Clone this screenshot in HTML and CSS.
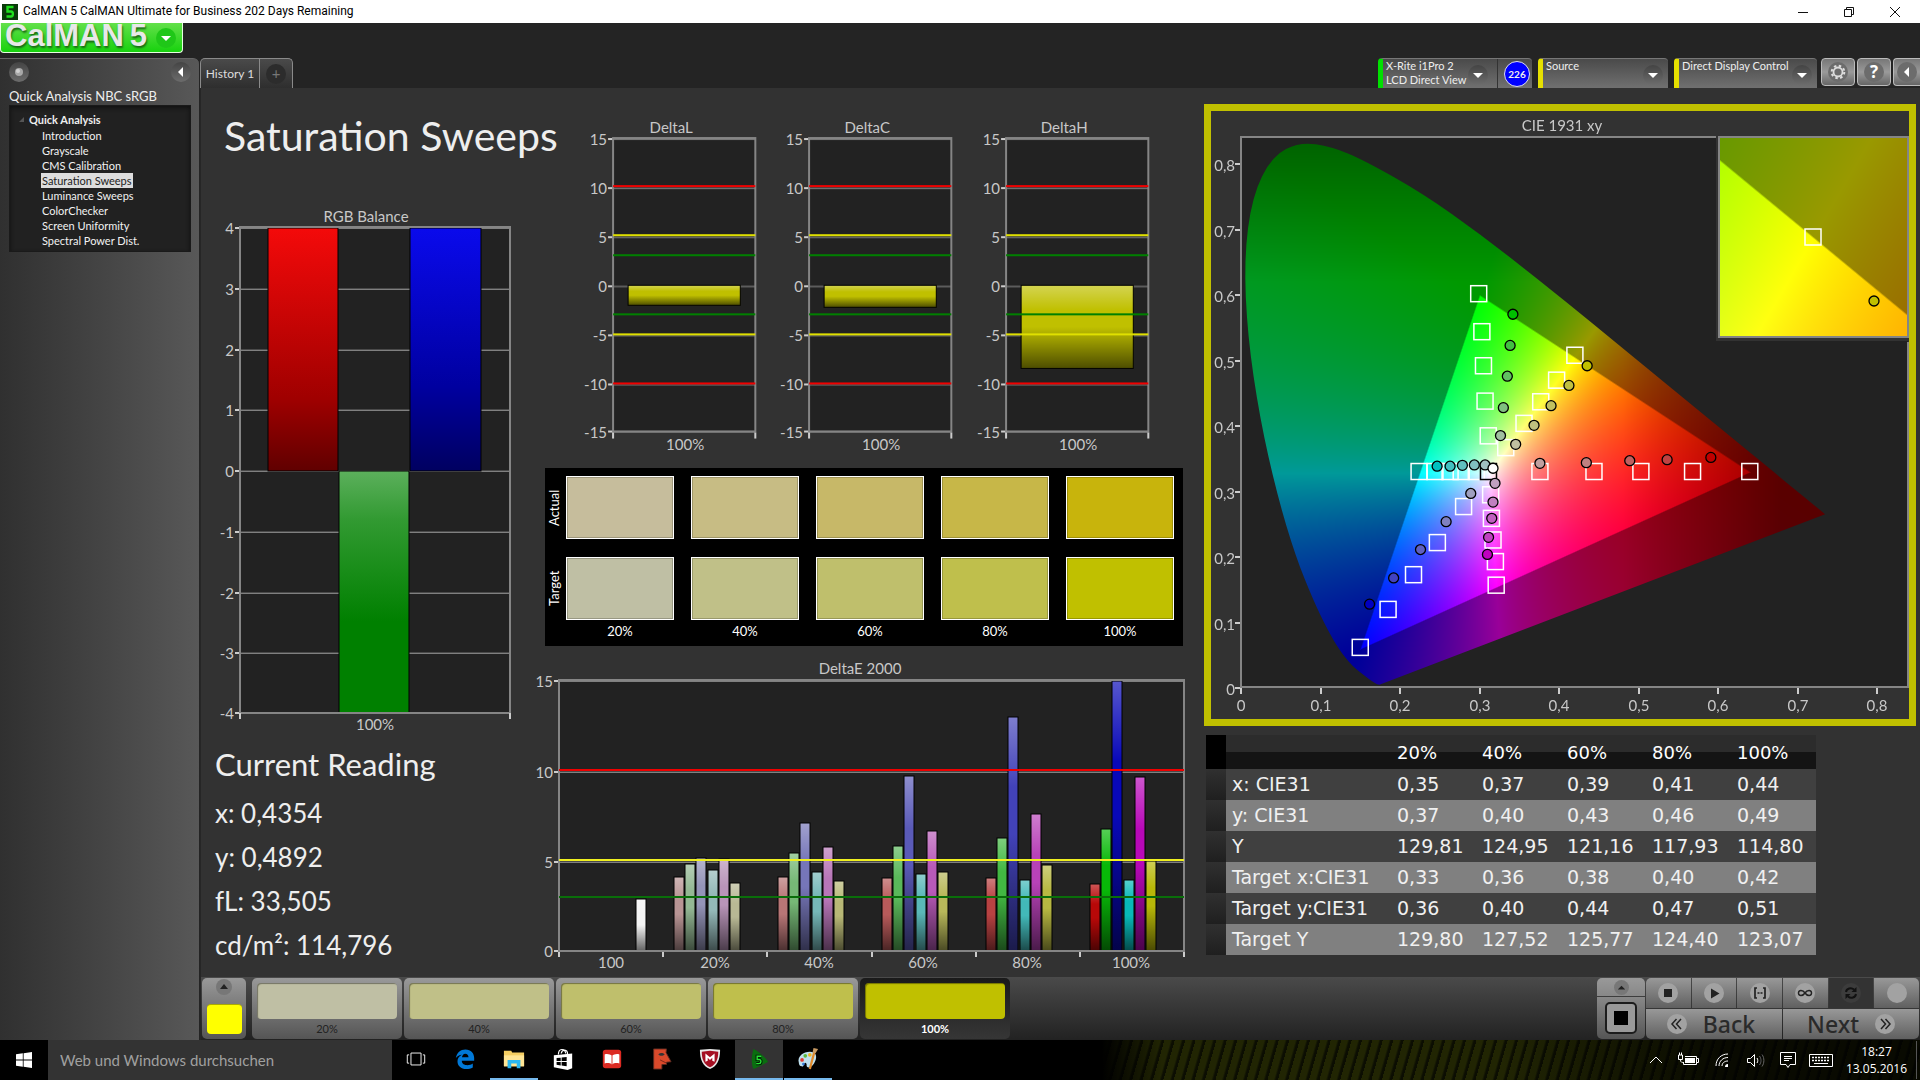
FILE: index.html
```html
<!DOCTYPE html>
<html lang="en">
<head>
<meta charset="utf-8">
<title>CalMAN 5</title>
<link rel="stylesheet" href="styles.css">
</head>
<body>
<div class="app">
  <header class="titlebar">
    <svg class="app-icon" viewBox="0 0 16 16"><rect width="16" height="16" fill="#0a3a0a"/><path d="M11.500 3H5.500V7.500H9C11.500 7.500 11.500 12.500 9 12.500H4.500" fill="none" stroke="#1fe01f" stroke-width="2.400"/></svg>
    <span class="app-title">CalMAN 5 CalMAN Ultimate for Business 202 Days Remaining</span>
    <div class="window-controls">
      <button aria-label="Minimize"><svg viewBox="0 0 12 12"><path d="M1 6.500H11"/></svg></button>
      <button aria-label="Restore"><svg viewBox="0 0 12 12"><path d="M1.500 3.500H8.500V10.500H1.500ZM3.500 3.500V1.500H10.500V8.500H8.500"/></svg></button>
      <button aria-label="Close"><svg viewBox="0 0 12 12"><path d="M1 1L11 11M11 1L1 11"/></svg></button>
    </div>
  </header>

  <div class="shell">
    <aside class="side">
      <button class="logo"><span class="logo-name">CalMAN</span><span class="logo-five">5</span><span class="logo-drop"><svg viewBox="0 0 20 20"><path d="M5 8H15L10 13Z" fill="#fff"/></svg></span></button>
      <div class="sidebar">
        <div class="side-tools">
          <button class="knob" aria-label="Record"><svg viewBox="0 0 20 20"><circle cx="10" cy="10" r="4" fill="#a8a8a8"/><circle cx="9" cy="9" r="2" fill="#d0d0d0"/></svg></button>
          <button class="knob" aria-label="Collapse"><svg viewBox="0 0 20 20"><path d="M12 5V15L7 10Z" fill="#fff"/></svg></button>
        </div>
        <h2 class="side-title">Quick Analysis NBC sRGB</h2>
        <nav class="tree">
          <div class="tree-head"><svg viewBox="0 0 8 8"><path d="M6 1V6H1Z" fill="#555"/></svg>Quick Analysis</div>
          <a href="#">Introduction</a>
          <a href="#">Grayscale</a>
          <a href="#">CMS Calibration</a>
          <a href="#" class="selected">Saturation Sweeps</a>
          <a href="#">Luminance Sweeps</a>
          <a href="#">ColorChecker</a>
          <a href="#">Screen Uniformity</a>
          <a href="#">Spectral Power Dist.</a>
        </nav>
      </div>
    </aside>

    <main class="main">
      <div class="topbar">
        <div class="tabs"><button class="tab">History 1</button><button class="tab add" aria-label="Add"><span>+</span></button></div>
        <div class="devices">
          <div class="device meter ok">
            <span class="device-name">X-Rite i1Pro 2<br>LCD Direct View</span>
            <button class="knob drop" aria-label="Meter"><svg viewBox="0 0 20 20"><path d="M5 8H15L10 13Z" fill="#fff"/></svg></button>
            <span class="count"><b>226</b></span>
          </div>
          <div class="device source">
            <span class="device-name">Source</span>
            <button class="knob drop" aria-label="Source"><svg viewBox="0 0 20 20"><path d="M5 8H15L10 13Z" fill="#fff"/></svg></button>
          </div>
          <div class="device display">
            <span class="device-name">Direct Display Control</span>
            <button class="knob drop" aria-label="Display"><svg viewBox="0 0 20 20"><path d="M5 8H15L10 13Z" fill="#fff"/></svg></button>
          </div>
          <button class="tool" aria-label="Settings"><svg viewBox="0 0 24 24"><circle cx="12" cy="12" r="10" fill="#6c6c6c"/><circle cx="12" cy="12" r="4.500" fill="none" stroke="#ddd" stroke-width="1.800"/><circle cx="12" cy="12" r="6.300" fill="none" stroke="#ddd" stroke-width="2" stroke-dasharray="2.500 2.450"/></svg></button>
          <button class="tool help" aria-label="Help"><span>?</span></button>
          <button class="tool last" aria-label="Collapse panel"><svg viewBox="0 0 24 24"><circle cx="12" cy="12" r="10" fill="#6c6c6c"/><path d="M14 7V17L9 12Z" fill="#fff"/></svg></button>
        </div>
      </div>

      <div class="board">
        <section class="col-left">
          <h1>Saturation Sweeps</h1>
          <svg id="rgb" class="chart" viewBox="0 0 330 540"></svg>
          <h2>Current Reading</h2>
          <p>x: 0,4354</p>
          <p>y: 0,4892</p>
          <p>fL: 33,505</p>
          <p>cd/m²: 114,796</p>
        </section>

        <section class="col-mid">
          <div class="deltas">
            <svg id="deltaL" class="chart" viewBox="0 0 196 350"></svg>
            <svg id="deltaC" class="chart" viewBox="0 0 196 350"></svg>
            <svg id="deltaH" class="chart" viewBox="0 0 196 350"></svg>
          </div>
          <div class="swatches">
            <span class="row-name">Actual</span><i class="a20"></i><i class="a40"></i><i class="a60"></i><i class="a80"></i><i class="a100"></i>
            <span class="row-name">Target</span><i class="t20"></i><i class="t40"></i><i class="t60"></i><i class="t80"></i><i class="t100"></i>
            <span></span><b>20%</b><b>40%</b><b>60%</b><b>80%</b><b>100%</b>
          </div>
          <svg id="deltaE" class="chart" viewBox="0 0 670 324"></svg>
        </section>

        <section class="col-right">
          <div class="cie">
            <canvas id="gamut" width="698" height="608"></canvas>
            <svg id="cie" class="chart" viewBox="0 0 698 608"></svg>
          </div>
          <table class="data">
            <thead><tr><th class="grip"></th><th class="name"></th><th>20%</th><th>40%</th><th>60%</th><th>80%</th><th>100%</th></tr></thead>
            <tbody>
              <tr><td class="grip"></td><td>x: CIE31</td><td>0,35</td><td>0,37</td><td>0,39</td><td>0,41</td><td>0,44</td></tr>
              <tr><td class="grip"></td><td>y: CIE31</td><td>0,37</td><td>0,40</td><td>0,43</td><td>0,46</td><td>0,49</td></tr>
              <tr><td class="grip"></td><td>Y</td><td>129,81</td><td>124,95</td><td>121,16</td><td>117,93</td><td>114,80</td></tr>
              <tr><td class="grip"></td><td>Target x:CIE31</td><td>0,33</td><td>0,36</td><td>0,38</td><td>0,40</td><td>0,42</td></tr>
              <tr><td class="grip"></td><td>Target y:CIE31</td><td>0,36</td><td>0,40</td><td>0,44</td><td>0,47</td><td>0,51</td></tr>
              <tr><td class="grip"></td><td>Target Y</td><td>129,80</td><td>127,52</td><td>125,77</td><td>124,40</td><td>123,07</td></tr>
            </tbody>
          </table>
        </section>
      </div>

      <footer class="steps">
        <button class="current" aria-label="Pattern"><svg viewBox="0 0 16 16"><circle cx="8" cy="8" r="8" fill="#777"/><path d="M4 10L8 5L12 10Z" fill="#222"/></svg><i></i></button>
        <div class="step-list">
          <button class="step"><i class="t20"></i>20%</button>
          <button class="step"><i class="t40"></i>40%</button>
          <button class="step"><i class="t60"></i>60%</button>
          <button class="step"><i class="t80"></i>80%</button>
          <button class="step active"><i class="t100"></i>100%</button>
        </div>
        <div class="stopper">
          <button aria-label="Expand"><svg viewBox="0 0 16 16"><circle cx="8" cy="8" r="8" fill="#777"/><path d="M4 10L8 6L12 10Z" fill="#222"/></svg></button>
          <button class="big" aria-label="Stop reading"><svg viewBox="0 0 32 32"><rect x="1" y="1" width="30" height="30" rx="4" fill="#999" stroke="#1c1c1c" stroke-width="2"/><rect x="9" y="9" width="14" height="14" fill="#000"/></svg></button>
        </div>
        <div class="transport">
          <button aria-label="Stop"><svg viewBox="0 0 20 20"><circle cx="10" cy="10" r="10"/><rect x="6" y="6" width="8" height="8" fill="#222"/></svg></button>
          <button aria-label="Play"><svg viewBox="0 0 20 20"><circle cx="10" cy="10" r="10"/><path d="M7 5.500L15.500 10.500L7 15.500Z" fill="#222"/></svg></button>
          <button aria-label="Read series"><svg viewBox="0 0 20 20"><circle cx="10" cy="10" r="10"/><path d="M7 5H5V15H7M13 5H15V15H13M7.500 10H9M9.500 10H10.500M11 10H12.500" fill="none" stroke="#222" stroke-width="1.700"/></svg></button>
          <button aria-label="Read continuously"><svg viewBox="0 0 20 20"><circle cx="10" cy="10" r="10"/><path d="M10 10C8 7 3.500 6.500 3.500 10S8 13 10 10S16.500 6.500 16.500 10S12 13 10 10Z" fill="none" stroke="#222" stroke-width="1.500"/></svg></button>
          <button class="dark" aria-label="Refresh"><svg viewBox="0 0 20 20"><circle cx="10" cy="10" r="10"/><path d="M5 9C5.500 5.500 10 4 13 6.500M15 11C14.500 14.500 10 16 7 13.500" fill="none" stroke="#111" stroke-width="2"/><path d="M15.500 4V9H10.500ZM4.500 16V11H9.500Z" fill="#111"/></svg></button>
          <button aria-label="Blank"><svg viewBox="0 0 20 20"><circle cx="10" cy="10" r="10"/></svg></button>
          <button class="wide"><svg viewBox="0 0 20 20"><circle cx="10" cy="10" r="10"/><path d="M9.500 5L5 10L9.500 15M14 5L9.500 10L14 15" fill="none" stroke="#222" stroke-width="1.500"/></svg>Back</button>
          <button class="wide">Next<svg viewBox="0 0 20 20"><circle cx="10" cy="10" r="10"/><path d="M6 5L10.500 10L6 15M10.500 5L15 10L10.500 15" fill="none" stroke="#222" stroke-width="1.500"/></svg></button>
        </div>
      </footer>
    </main>
  </div>

  <div class="taskbar">
    <button class="start" aria-label="Start"><svg viewBox="0 0 16 16"><path d="M0 2.300L6.800 1.300V7.600H0ZM7.600 1.200L16 0V7.600H7.600ZM0 8.400H6.800V14.700L0 13.700ZM7.600 8.400H16V16L7.600 14.800Z" fill="#fff"/></svg></button>
    <input class="search" type="text" aria-label="Search" placeholder="Web und Windows durchsuchen">
    <div class="task-apps">
      <button aria-label="Task view"><svg viewBox="0 0 24 24"><path d="M6.500 5.500H17.500V18.500H6.500ZM4.500 7.500H2.500V16.500H4.500M19.500 7.500H21.500V16.500H19.500" fill="none" stroke="#fff"/></svg></button>
      <button aria-label="Edge"><svg viewBox="0 0 24 24"><path d="M2 11C3 5 7 1.500 12.500 1.500C18.500 1.500 22 5.500 22 11V14H8.500C8.500 17.500 11.500 18.800 14.500 18.800C17 18.800 19 18 20.500 17V21.200C18.500 22.300 16 23 13.500 23C7.500 23 3.800 19.500 3.800 14.500C3.800 11.500 5.500 8.800 8.500 7.300C6 7.500 3.500 9 2 11ZM8.700 10.200H15.800C15.800 7.500 14.300 6.200 12.300 6.200C10.300 6.200 9 7.800 8.700 10.200Z" fill="#0078d7"/></svg></button>
      <button class="open" aria-label="Explorer"><svg viewBox="0 0 24 24"><path d="M1 3H9L10 5H23V20H1Z" fill="#f5ce62"/><path d="M1 8H23V20H1Z" fill="#ffe594"/><path d="M5 13H19V22H15V17H9V22H5Z" fill="#2bb7f0"/></svg></button>
      <button aria-label="Store"><svg viewBox="0 0 24 24"><path d="M7 7C7 0 14 0 15 6M10 6C11 1 17 1 17 7" fill="none" stroke="#fff" stroke-width="1.300"/><path d="M2 8L22 6V22L17 24L2 21Z" fill="#fff"/><path d="M5 11L9.500 10.500V14.200H5ZM10.500 10.400L16 9.800V14.200H10.500ZM5 15.200H9.500V19L5 18.400ZM10.500 15.200H16V20L10.500 19.200Z" fill="#000"/></svg></button>
      <button aria-label="Reader"><svg viewBox="0 0 24 24"><rect x="2" y="2" width="20" height="20" rx="3" fill="#dc2a22"/><path d="M4 7C7 6 10 7 12 8.500C14 7 17 6 20 7V17C17 16 14 16.500 12 18C10 16.500 7 16 4 17Z" fill="#fff"/><path d="M12 8V18" stroke="#dc2a22"/></svg></button>
      <button aria-label="Face"><svg viewBox="0 0 24 24"><path d="M4 1H18L17.500 5L23 15L18 15.500V18H13V23H4Z" fill="#d9492b" stroke="#5a2a20"/><path d="M9 7C11 5 14 5 16 7C14 9 11 9 9 7Z" fill="#333"/><path d="M11 13L18 16.500" stroke="#7a2415"/></svg></button>
      <button aria-label="Security"><svg viewBox="0 0 24 24"><path d="M1 2L12 1L23 2C23 13 20 20 12 23C4 20 1 13 1 2Z" fill="#e8e8e8"/><path d="M3 4L12 3L21 4C21 12 18.500 18 12 21C5.500 18 3 12 3 4Z" fill="#a50f22"/><path d="M7 15V6L12 10L17 6V15L14.500 14V10.500L12 13L9.500 10.500V14Z" fill="#fff"/></svg></button>
      <button class="active" aria-label="CalMAN"><svg viewBox="0 0 24 24"><path d="M6 1C12 4 18 9 22 15C16 18 11 21 6 23C3 17 4 8 6 1Z" fill="#0a6d10"/><path d="M14.500 9H10V12.500H12.500C15 13 14.500 17 12 17H9" fill="none" stroke="#021a04" stroke-width="3.500"/><path d="M14.500 9H10V12.500H12.500C15 13 14.500 17 12 17H9" fill="none" stroke="#27e436" stroke-width="1.500"/></svg></button>
      <button class="open" aria-label="Paint"><svg viewBox="0 0 24 24"><path d="M2 16C0 9 7 4 14 4C21 4 22 9 20 14C18 19 15 22 12 21C9 20 12 17 9 16C7 16 8 21 5 20C3 20 2 18 2 16Z" fill="#bfe0ee"/><circle cx="5.500" cy="13" r="2" fill="#e23b2e"/><circle cx="9" cy="8.500" r="2" fill="#5cb83a"/><circle cx="14" cy="7.500" r="2" fill="#f0b323"/><circle cx="7" cy="17.500" r="1.500" fill="#3a7bd5"/><path d="M19 4L14 23" stroke="#e08a2c" stroke-width="2.500"/><path d="M17 5L18 0L23 1L20 6Z" fill="#c89a62"/></svg></button>
    </div>
    <div class="tray">
      <button aria-label="Show hidden icons"><svg viewBox="0 0 24 20"><path d="M6 13L12 7L18 13" class="ln"/></svg></button>
      <button aria-label="Battery"><svg viewBox="0 0 24 20"><path d="M8 6.500H19.500V14.500H6.500V12M20 8.500H21.500V12.500H20M1.500 5V9.500H5.500V5ZM2.500 2.500V5M4.500 2.500V5M3.500 10C3.500 12.500 5 12.500 7 12.500" class="ln"/><rect x="8" y="8" width="10" height="5" fill="#fff"/></svg></button>
      <button aria-label="Network"><svg viewBox="0 0 24 20"><path d="M6 16C6 9 11 4 18 4M9 16C9 11 13 7.500 18 7.500M12 16C12 13 14.500 11 18 11" class="ln"/><path d="M15 17C15 15 16 14 18 14V17Z" fill="#fff"/></svg></button>
      <button aria-label="Volume"><svg viewBox="0 0 24 20"><path d="M4.500 8.500H7.500L11.500 4.500V16.500L7.500 12.500H4.500Z" class="ln"/><path d="M14 8C15 9.500 15 11.500 14 13" class="ln"/><path d="M16.500 6C18.500 9 18.500 12 16.500 15M19 4.500C21.500 8 21.500 13 19 16.500" fill="none" stroke="#666"/></svg></button>
      <button aria-label="Notifications"><svg viewBox="0 0 24 20"><path d="M4.500 2.500H19.500V14.500H14L12 17.500L10 14.500H4.500ZM8 6.500H16M8 8.500H16M8 10.500H13" class="ln"/></svg></button>
      <button aria-label="Keyboard"><svg viewBox="0 0 24 20"><path d="M.500 4.500H23.500V16.500H.500Z" class="ln"/><path d="M3 7.500H21M3 10.500H21" fill="none" stroke="#fff" stroke-width="1.500" stroke-dasharray="2 1"/><path d="M5 13.500H19" class="ln"/></svg></button>
      <time class="clock">18:27<br>13.05.2016</time>
    </div>
  </div>
</div>
<script src="charts.js"></script>
</body>
</html>
```
FILE: styles.css
```css
* { box-sizing: border-box; }
body { margin: 0; background: #242424; color: #eee; font-family: Lato, "Liberation Sans", sans-serif; }
button { border: 0; padding: 0; margin: 0; background: none; color: inherit; font: inherit; }
h1, h2, p { margin: 0; font-weight: 400; white-space: nowrap; }
svg, canvas { display: block; }

.app { min-height: 100vh; display: flex; flex-direction: column; overflow-x: hidden; }

.titlebar { height: 23px; background: #fff; color: #000; display: flex; align-items: center; padding-left: 2px; gap: 5px; font: 12px/23px Roboto, "Noto Sans", sans-serif; }
.app-icon { width: 16px; height: 16px; }
.window-controls { margin-left: auto; display: flex; padding-right: 2px; }
.window-controls button { width: 46px; height: 22px; display: grid; place-items: center; }
.window-controls svg { width: 12px; height: 12px; fill: none; stroke: #111; }

.shell { flex: 1; display: flex; }
.side { width: 200px; flex: none; display: flex; flex-direction: column; padding-right: 1px; }
.logo { width: 183px; height: 30px; overflow: hidden; display: flex; align-items: center; padding-left: 4px; margin-bottom: 5px; background: linear-gradient(#63e04a, #17d20e); border: 1px solid #e6ffe0; border-top: 0; border-radius: 0 0 4px 4px; color: #e8e8e8; font: bold 31px/24px "Liberation Sans", sans-serif; text-shadow: 1px 2px 2px #1a6a16; }
.logo-name, .logo-five { height: 28px; }
.logo-five { margin-left: 6px; }
.logo-drop { margin: 0 6px 0 auto; width: 20px; height: 20px; border-radius: 50%; background: #1fc718; }
.sidebar { flex: 1; border-radius: 0 6px 0 0; background: linear-gradient(90deg, #303030, #585858); border-top: 1px solid #666; padding: 3px 8px 0 9px; }
.side-tools { display: flex; justify-content: space-between; }
.knob { width: 20px; height: 20px; border-radius: 50%; background: linear-gradient(#444, #6c6c6c); flex: none; }
.side-title { font-size: 13px; line-height: 17px; margin-top: 6px; }
.tree { height: 147px; padding: 5px 0 0 32px; background: #212121; border: 1px solid #1a1a1a; display: flex; flex-direction: column; align-items: flex-start; font: 11px/15px Lato, sans-serif; box-shadow: inset 0 2px 4px #111; }
.tree-head { font-weight: 700; display: flex; align-items: center; margin-left: -24px; gap: 3px; line-height: 17px; }
.tree-head svg { width: 8px; height: 8px; }
.tree a { color: #f2f2f2; text-decoration: none; white-space: nowrap; margin-left: -1px; padding: 0 1px; }
.tree a.selected { background: #ddd; color: #222; }

.main { flex: 1; min-width: 0; display: flex; flex-direction: column; }
.topbar { height: 65px; display: flex; justify-content: space-between; align-items: flex-end; }
.tabs { display: flex; height: 30px; border: 1px solid #8a8a8a; border-bottom: 0; border-radius: 5px 5px 0 0; background: linear-gradient(#4a4a4a, #2e2e2e); }
.tab { width: 58px; font-size: 12px; color: #ddd; }
.tab.add { width: 33px; border-left: 1px solid #8a8a8a; color: #777; display: grid; place-items: center; }
.tab.add span { width: 20px; height: 20px; border-radius: 50%; background: #2c2c2c; line-height: 19px; font-size: 15px; }
.devices { display: flex; height: 30px; }
.device { display: flex; align-items: flex-start; border-left: 5px solid #e6e000; border-radius: 4px 4px 0 0; background: linear-gradient(#4a4a4a, #707070); border-top: 1px solid #777; padding-left: 3px; margin-right: 6px; }
.device.ok { border-left-color: #00e000; }
.device-name { font-size: 11px; line-height: 14px; white-space: nowrap; flex: 1; min-width: 0; }
.drop { margin: 6px 5px 0 0; }
.meter { width: 154px; }
.meter .drop { margin-right: 9px; }
.source { width: 130px; }
.display { width: 143px; margin-right: 4px; }
.count { flex: none; width: 35px; height: 29px; border-left: 1px solid #333; display: grid; place-items: center; padding-left: 4px; }
.count b { width: 26px; height: 26px; border-radius: 50%; border: 1px solid #dde; background: #00f; text-align: center; font-size: 10px; line-height: 24px; }
.tool { width: 34px; height: 28px; margin-right: 2px; border: 1px solid #bbb; border-radius: 4px; background: linear-gradient(#777, #9a9a9a 50%, #666); display: grid; place-items: center; }
.tool svg { width: 24px; height: 24px; }
.tool span { width: 20px; height: 20px; border-radius: 50%; background: #6c6c6c; font: bold 17px/20px "Open Sans", sans-serif; color: #fff; }
.tool.last { width: 27px; margin-right: 0; border-right: 0; border-radius: 4px 0 0 4px; }

.board { flex: 1; background: #323232; display: grid; grid-template-columns: 330fr 670fr 720fr; align-items: start; box-shadow: inset 1px 0 #262626; }
.chart { width: 100%; height: auto; overflow: visible; font-family: Lato, sans-serif; font-size: 15px; fill: #c8c8c8; }
.col-left { padding-top: 18px; min-width: 0; }
.col-left h1 { font-size: 41px; line-height: 60px; margin: 0 0 34px 24px; }
.col-left h2 { font-size: 31px; line-height: 44px; margin: 2px 0 5px 15px; }
.col-left p { font-size: 26px; line-height: 44px; margin-left: 15px; }
.col-mid { padding-top: 22px; min-width: 0; }
.deltas { display: grid; grid-template-columns: repeat(3, 1fr); margin: 0 48px 7px 33px; }
.swatches { margin: 0 17px 5px 15px; height: 178px; background: #000; padding: 8px 9px 0 0; display: grid; grid-template-columns: 4px repeat(5, 1fr); grid-template-rows: 63px 63px 20px; gap: 18px 17px; font-size: 13px; color: #fff; }
.swatches i { border: 1px solid #fff; box-shadow: inset 0 0 0 1px #0003; }
.swatches b { font-weight: 400; text-align: center; margin-top: -15px; }
.row-name { width: 18px; writing-mode: vertical-rl; rotate: 180deg; text-align: center; line-height: 18px; }
.a20 { background: #c6bd9c; } .a40 { background: #c7bc84; } .a60 { background: #c7b868; } .a80 { background: #c7b748; } .a100 { background: #c8b40c; }
.t20 { background: #bfbfa4; } .t40 { background: #c0c088; } .t60 { background: #bfbf6c; } .t80 { background: #bfbf4c; } .t100 { background: #c0c000; }

.col-right { padding: 16px 4px 0; min-width: 0; }
.cie { border: 7px solid #c0c000; display: grid; margin-bottom: 9px; }
.cie > * { grid-area: 1 / 1; width: 100%; }
.data { border-collapse: collapse; margin-left: 2px; font: 19px/31px "DejaVu Sans", sans-serif; color: #f0f0f0; table-layout: fixed; }
.data th, .data td { padding: 0 0 0 6px; width: 85px; height: 31px; text-align: left; font-weight: 400; white-space: nowrap; }
.data th { height: 34px; font-size: 18px; background: linear-gradient(#2c2c2c 50%, #141414 50%); color: #fff; }
.data td:nth-child(2), .data th.name { width: 165px; }
.data tbody tr { background: #404040; }
.data tbody tr:nth-child(even) { background: #808080; }
.data .grip { width: 20px; padding: 0; background: linear-gradient(#303030, #1f1f1f); }
.data th.grip { background: #000; }

.steps { height: 63px; padding: 1px 1px 1px 2px; display: flex; background: linear-gradient(#4a4a4a, #222); box-shadow: inset 1px 0 #262626; }
.current { width: 44px; border-radius: 5px; background: linear-gradient(#999, #555); display: flex; flex-direction: column; align-items: center; justify-content: space-between; padding: 1px 5px 5px; margin-right: 6px; }
.current svg { width: 16px; height: 16px; }
.current i { width: 35px; height: 30px; border-radius: 4px; background: #ff0; border-top: 1px solid #aa0; }
.step-list { display: flex; gap: 2px; }
.step { width: 150px; border-radius: 5px; background: linear-gradient(#999, #555); display: flex; flex-direction: column; align-items: center; font-size: 11px; line-height: 20px; color: #222; padding-top: 5px; }
.step i { width: 140px; height: 36px; border-radius: 4px; box-shadow: inset 1px 1px 1px #0006; }
.step.active { background: linear-gradient(#1a1a1a, #363636); color: #fff; font-weight: 700; }
.stopper { margin-left: auto; width: 48px; display: grid; grid-template-rows: 18px 1fr; gap: 1px; border-radius: 5px; overflow: hidden; margin-right: 1px; }
.stopper button { background: linear-gradient(#999, #888); display: grid; place-items: center; }
.stopper .big { background: linear-gradient(#888, #555); }
.stopper svg { width: 15px; height: 15px; }
.stopper .big svg { width: 32px; height: 32px; }
.transport { width: 273px; display: grid; grid-template-columns: repeat(6, 1fr); grid-template-rows: 30px 30px; gap: 1px; border-radius: 5px; overflow: hidden; }
.transport button { background: linear-gradient(#989898, #606060); display: flex; align-items: center; justify-content: center; }
.transport svg { width: 20px; height: 20px; fill: #a2a2a2; }
.transport .dark { background: #333; }
.transport .dark svg { fill: #3c3c3c; }
.transport .wide { grid-column: span 3; gap: 16px; padding-right: 6px; font: 500 23px/30px "Noto Sans", sans-serif; color: #2a2a2a; }
.transport .wide:last-child { padding-right: 0; }

.taskbar { height: 40px; display: flex; background: #000; }
.start { width: 48px; display: grid; place-items: center; }
.start svg { width: 16px; height: 16px; }
.search { width: 344px; border: 0; padding: 0 12px; background: #333; color: #aaa; font: 15px Lato, sans-serif; }
.search::placeholder { color: #a0a0a0; }
.task-apps { display: flex; gap: 1px; }
.task-apps button { width: 48px; display: grid; place-items: center; border-bottom: 2px solid transparent; }
.task-apps svg { width: 22px; height: 22px; }
.task-apps .open { border-bottom-color: #76b9ed; }
.task-apps .active { background: #333; border-bottom-color: #76b9ed; }
.tray { flex: 1; margin-left: 270px; display: flex; align-items: center; justify-content: flex-end; padding-right: 3px; background: linear-gradient(90deg, #000, transparent 60px calc(100% - 420px), #000b calc(100% - 200px)), repeating-linear-gradient(106deg, #212503 0 6px, #0c0e02 8px 10px); }
.tray button { width: 33px; display: grid; place-items: center; }
.tray svg { width: 24px; height: 20px; }
.ln { fill: none; stroke: #fff; }
.clock { width: 80px; text-align: center; font: 12px/17px "Open Sans", sans-serif; color: #fff; border-right: 1px solid #555; height: 38px; padding-top: 2px; }
```
FILE: charts.js
```js
const NS = 'http://www.w3.org/2000/svg';

function add(parent, tag, attrs, text) {
  const el = document.createElementNS(NS, tag);
  for (const k in attrs) el.setAttribute(k, attrs[k]);
  if (text !== undefined) el.textContent = text;
  parent.appendChild(el);
  return el;
}

function gradient(svg, id, stops) {
  const g = add(svg, 'linearGradient', { id, x1: 0, y1: 0, x2: 0, y2: 1 });
  stops.forEach(([offset, color, alpha]) => add(g, 'stop', { offset, 'stop-color': color, 'stop-opacity': alpha }));
}

function hline(svg, x1, x2, y, color, w) {
  add(svg, 'rect', { x: x1, y: y, width: x2 - x1, height: w, fill: color });
}

// Plot box: x, y, w, h; ticks are [label, y] pairs
function frame(svg, box, ticks, title, titleX, titleY) {
  add(svg, 'rect', { x: box.x, y: box.y, width: box.w, height: box.h, fill: '#222' });
  ticks.forEach(([label, y]) => {
    hline(svg, box.x, box.x + box.w, y, '#808080', 1);
    hline(svg, box.x, box.x + box.w, y - 1, '#4a4a4a', 1);
    hline(svg, box.x - 5, box.x, y - 1, '#ccc', 2);
    add(svg, 'text', { x: box.x - 6, y: y + 6, 'text-anchor': 'end' }, label);
  });
  add(svg, 'text', { x: titleX, y: titleY, 'text-anchor': 'middle' }, title);
}

function border(svg, box) {
  add(svg, 'rect', { x: box.x, y: box.y, width: box.w, height: box.h, fill: 'none', stroke: '#858585', 'stroke-width': 2 });
}

function bar(svg, x, y, w, h, fill, shade) {
  add(svg, 'rect', { x, y, width: w, height: h, fill });
  add(svg, 'rect', { x, y, width: w, height: h, fill: shade || 'none', stroke: '#000', 'stroke-width': 1 });
}

function rgbBalance() {
  const svg = document.getElementById('rgb');
  const box = { x: 40, y: 27, w: 270, h: 486 };
  gradient(svg, 'red', [[0, '#f40a0a', 1], [.7, '#a00000', 1], [1, '#600000', 1]]);
  gradient(svg, 'green', [[0, '#5cb05c', 1], [.2, '#329a32', 1], [.62, '#008000', 1]]);
  gradient(svg, 'blue', [[0, '#0a0aec', 1], [.65, '#0000a0', 1], [1, '#000060', 1]]);
  frame(svg, box, [[4, 28], [3, 89], [2, 150], [1, 210], [0, 271], [-1, 332], [-2, 393], [-3, 453], [-4, 513]], 'RGB Balance', 166, 22);
  bar(svg, 68, 28, 70, 243, 'url(#red)');
  bar(svg, 139, 271, 70, 242, 'url(#green)');
  bar(svg, 210, 28, 71, 243, 'url(#blue)');
  border(svg, box);
  [40, 310].forEach(x => add(svg, 'rect', { x: x - 1, y: 513, width: 2, height: 6, fill: '#ccc' }));
  add(svg, 'text', { x: 175, y: 530, 'text-anchor': 'middle' }, '100%');
}

function shade(svg, id) {
  gradient(svg, id, [[0, '#fff', .32], [.3, '#fff', 0], [.5, '#000', 0], [1, '#000', .6]]);
}

function delta(id, title, bottom) {
  const svg = document.getElementById(id);
  const box = { x: 50, y: 28, w: 142, h: 293 };
  shade(svg, id + 'Shade');
  frame(svg, box, [[15, 29], [10, 78], [5, 127], [0, 176], [-5, 225], [-10, 274], [-15, 321]], title, 108, 23);
  bar(svg, 65, 175, 112, bottom - 175, '#c0c000', `url(#${id}Shade)`);
  border(svg, box);
  [[75, '#f00000'], [124, '#e0e000'], [144, '#008000'], [203, '#008000'], [223, '#e0e000'], [272, '#f00000']]
    .forEach(([y, c]) => hline(svg, box.x, box.x + box.w, y, c, 2));
  [50, 192].forEach(x => add(svg, 'rect', { x: x - 1, y: 322, width: 2, height: 6, fill: '#ccc' }));
  add(svg, 'text', { x: 122, y: 339, 'text-anchor': 'middle' }, '100%');
}

function deltaE() {
  const svg = document.getElementById('deltaE');
  const box = { x: 29, y: 29, w: 625, h: 271 };
  shade(svg, 'barShade');
  frame(svg, box, [[15, 30], [10, 121], [5, 211], [0, 300]], 'DeltaE 2000', 330, 23);
  bar(svg, 106, 248, 10, 52, '#f4f4f4', 'url(#barShade)');
  const heights = [
    [74, 87, 93, 81, 92, 68], [74, 98, 128, 79, 104, 70], [73, 105, 175, 77, 120, 79],
    [73, 113, 234, 71, 137, 86], [67, 122, 270, 71, 174, 90]];
  const low = [148, 118, 90, 66, 8];
  heights.forEach((group, g) => {
    const l = low[g], h = 184;
    const colors = [[h, l, l], [l, h, l], [l, l, h], [l, h, h], [h, l, h], [h, h, l]];
    group.forEach((v, i) => bar(svg, 144 + g * 104 + Math.round(i * 11.2), 300 - v, 10, v, `rgb(${colors[i]})`, 'url(#barShade)'));
  });
  border(svg, box);
  hline(svg, 29, 654, 118, '#f00000', 2);
  hline(svg, 29, 654, 208, '#f0f020', 2);
  hline(svg, 29, 654, 245, '#0a6e0a', 2);
  ['100', '20%', '40%', '60%', '80%', '100%'].forEach((t, i) =>
    add(svg, 'text', { x: 81 + i * 104, y: 317, 'text-anchor': 'middle' }, t));
  for (let i = 0; i < 7; i++) add(svg, 'rect', { x: 28 + Math.round(i * 104.2), y: 301, width: 2, height: 5, fill: '#ccc' });
}

const plot = { x0: 30, y0: 577, kx: 795, ky: 655 };
const px = x => plot.x0 + x * plot.kx;
const py = y => plot.y0 - y * plot.ky;
const inset = { x: 508, y: 26, w: 189, h: 200, cx: .4193, cy: .5053, kx: 3800, ky: 3950 };

const locus = [[.1741, .005], [.1714, .0051], [.1644, .0109], [.1566, .0177], [.144, .0297], [.1355, .0399], [.1241, .0578],
  [.1096, .0868], [.0913, .1327], [.0687, .2007], [.0454, .295], [.0235, .4127], [.0082, .5384], [.0039, .6548], [.0139, .7502],
  [.0389, .812], [.0743, .8338], [.1142, .8262], [.1547, .8059], [.2296, .7543], [.3016, .6923], [.3731, .6245], [.4441, .5547],
  [.5125, .4866], [.5752, .4242], [.627, .3725], [.6658, .334], [.6915, .3083], [.719, .2809], [.7347, .2653]];

const clamp = (v, a, b) => Math.max(a, Math.min(b, v));

// Chromaticity to a display colour; the area outside the sRGB triangle is dimmed
function colorAt(x, y, sharp) {
  const yy = Math.max(y, .0001), X = x / yy, Z = (1 - x - y) / yy;
  let c = [3.2406 * X - 1.5372 - .4986 * Z, -.9689 * X + 1.8758 + .0415 * Z, .0557 * X - .204 + 1.057 * Z];
  c = c.map(v => Math.max(v, 0));
  const m = Math.max(...c);
  c = c.map(v => Math.pow(v / m, 1.05));
  const [ax, ay, bx, by, gx, gy] = [.64, .33, .3, .6, .15, .06];
  const d = (by - gy) * (ax - gx) + (gx - bx) * (ay - gy);
  const u = ((by - gy) * (x - gx) + (gx - bx) * (y - gy)) / d;
  const v = ((gy - ay) * (x - gx) + (ax - gx) * (y - gy)) / d;
  const inside = clamp(Math.min(u, v, 1 - u - v) * sharp + .5, 0, 1);
  let k = .6 + .4 * inside;
  k *= 1 - clamp((x - .48) / .2, 0, 1) * .42;
  k *= 1 - clamp((y - .62) / .21, 0, 1) * .35;
  return c.map(t => t * k * 255);
}

function field(w, h, toXY, sharp) {
  const cv = document.createElement('canvas');
  cv.width = w; cv.height = h;
  const ctx = cv.getContext('2d'), img = ctx.createImageData(w, h);
  for (let j = 0; j < h; j++) for (let i = 0; i < w; i++) {
    const c = colorAt(...toXY(i, j), sharp), o = (j * w + i) * 4;
    img.data[o] = c[0]; img.data[o + 1] = c[1]; img.data[o + 2] = c[2]; img.data[o + 3] = 255;
  }
  ctx.putImageData(img, 0, 0);
  return cv;
}

function gamut() {
  const ctx = document.getElementById('gamut').getContext('2d');
  ctx.fillStyle = '#222';
  ctx.fillRect(29, 26, 668, 550);
  ctx.save();
  ctx.beginPath();
  ctx.moveTo(px(locus[0][0]), py(locus[0][1]));
  for (let i = 1; i < locus.length - 1; i++) {
    const [a, b] = [locus[i], locus[i + 1]];
    ctx.quadraticCurveTo(px(a[0]), py(a[1]), px((a[0] + b[0]) / 2), py((a[1] + b[1]) / 2));
  }
  ctx.lineTo(px(.7347), py(.2653));
  ctx.closePath();
  ctx.clip();
  ctx.drawImage(field(698, 608, (i, j) => [(i - plot.x0) / plot.kx, (plot.y0 - j) / plot.ky], 220), 0, 0);
  ctx.restore();
  ctx.fillStyle = '#323232';
  ctx.fillRect(inset.x - 3, inset.y - 2, inset.w + 5, inset.h + 6);
  ctx.drawImage(field(inset.w, inset.h, (i, j) =>
    [inset.cx + (i - 94) / inset.kx, inset.cy - (j - 100) / inset.ky], 1100), inset.x, inset.y);
}

function cie() {
  const svg = document.getElementById('cie');
  add(svg, 'text', { x: 351, y: 20, 'text-anchor': 'middle' }, 'CIE 1931 xy');
  add(svg, 'path', { d: 'M505 26H30V576H697V231', fill: 'none', stroke: '#858585', 'stroke-width': 2 });
  add(svg, 'rect', { x: inset.x, y: inset.y, width: inset.w, height: inset.h, fill: 'none', stroke: '#858585', 'stroke-width': 2 });
  for (let i = 0; i <= 8; i++) {
    const t = i ? '0,' + i : '0', X = Math.round(px(i / 10)), Y = Math.round(py(i / 10));
    add(svg, 'rect', { x: X - 1, y: 577, width: 2, height: 6, fill: '#ccc' });
    add(svg, 'rect', { x: 24, y: Y - 1, width: 5, height: 2, fill: '#ccc' });
    add(svg, 'text', { x: X, y: 600, 'text-anchor': 'middle' }, t);
    add(svg, 'text', { x: 24, y: Y + 7, 'text-anchor': 'end' }, t);
  }
  const square = (x, y, stroke) => add(svg, 'rect', { x: x - 8, y: y - 8, width: 16, height: 16, fill: 'none', stroke, 'stroke-width': 1.5 });
  const dot = (x, y, fill) => add(svg, 'circle', { cx: x, cy: y, r: 5, fill, stroke: '#000', 'stroke-width': 1.3 });
  [[.299, .602], [.303, .544], [.305, .492], [.307, .438], [.311, .385], [.42, .508], [.397, .47], [.377, .437], [.356, .404],
    [.333, .367], [.376, .3305], [.444, .3305], [.503, .3305], [.568, .3305], [.64, .3305], [.224, .3305], [.244, .3305],
    [.263, .3305], [.277, .3305], [.296, .3305], [.314, .295], [.315, .259], [.317, .226], [.32, .193], [.321, .157],
    [.28, .277], [.247, .222], [.217, .173], [.185, .12], [.15, .062]].forEach(([x, y]) => square(px(x), py(y), '#fff'));
  square(px(.3113), py(.3305), '#000');
  const series = [
    [[0, 1, 0], [[.3264, .3854], [.33, .428], [.335, .476], [.3385, .523], [.342, .5706]]],
    [[1, 1, 0], [[.3455, .372], [.3686, .401], [.39, .431], [.4125, .462], [.4354, .492]]],
    [[1, 0, 0], [[.376, .343], [.4344, .344], [.489, .347], [.536, .3486], [.591, .352]]],
    [[0, 1, 1], [[.307, .3405], [.2935, .3405], [.2785, .34], [.263, .3386], [.2467, .3386]]],
    [[1, 0, 1], [[.3195, .3125], [.317, .2838], [.3154, .259], [.3114, .23], [.31, .204]]],
    [[0, 0, 1], [[.289, .297], [.258, .254], [.2258, .2114], [.192, .168], [.1617, .128]]]];
  const low = [160, 128, 96, 66, 0];
  series.forEach(([mask, pts]) => pts.forEach(([x, y], i) =>
    dot(px(x), py(y), `rgb(${mask.map(m => m ? 192 : low[i])})`)));
  dot(px(.317), py(.3355), '#fff');
  square(602, 126, '#fff');
  dot(663, 190, '#c0c000');
}

rgbBalance();
delta('deltaL', 'DeltaL', 195);
delta('deltaC', 'DeltaC', 197);
delta('deltaH', 'DeltaH', 258);
deltaE();
gamut();
cie();
```
